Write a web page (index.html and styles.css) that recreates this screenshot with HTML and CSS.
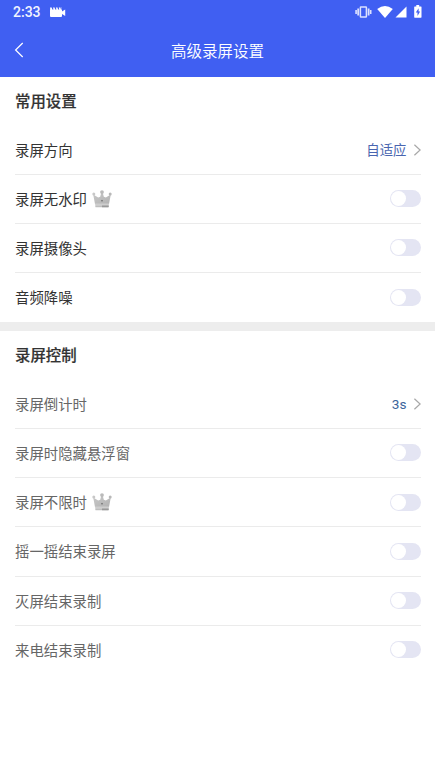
FILE: index.html
```html
<!DOCTYPE html>
<html lang="zh-CN">
<head>
<meta charset="utf-8">
<title>高级录屏设置</title>
<link rel="stylesheet" href="styles.css">
</head>
<body>
<svg class="defs" aria-hidden="true">
  <defs>
    <linearGradient id="silver" x1="0" y1="0" x2="1" y2="1"><stop offset="0" stop-color="#c8c8c8"/><stop offset="1" stop-color="#b2b2b2"/></linearGradient>
    <symbol id="crown" viewBox="0 0 20 18">
      <path d="M1.2 4.5 6.2 7.4 8.2 6.8 9.2 3H10.8L11.8 6.8 13.8 7.4 18.8 4.5 17 14H3Z" fill="url(#silver)"/>
      <circle cx="1.8" cy="4" r="1.5" fill="#c8c8c8"/><circle cx="10" cy="2.1" r="1.9" fill="#bababa"/><circle cx="18.2" cy="4" r="1.5" fill="#b8b8b8"/>
      <path d="M3 13.6H17L16.7 15.2H3.3Z" fill="#cecece"/>
      <path d="M3.3 15.2H16.7V16.4Q16.7 17.3 15.8 17.3H4.3Q3.3 17.3 3.3 16.4Z" fill="#bebebe"/>
      <path d="M10 15.4H16.7V16.4Q16.7 17.3 15.8 17.3H10Z" fill="#999"/>
      <path d="m10 9.8 1.1 1-1.1 1-1.1-1Z" fill="#707070"/>
    </symbol>
    <symbol id="chevron" viewBox="0 0 8 12"><path d="M1.4.8 7.1 6 1.4 11.2" fill="none" stroke="#a8a8a8" stroke-width="1.2"/></symbol>
  </defs>
</svg>
<header class="top">
  <div class="status">
    <span class="time">2:33</span>
    <svg class="camera" width="16" height="11" viewBox="0 0 16 11"><path d="M0 2.6H12V4.4L15.2 2.5V9L12 7V9Q12 10 11 10H1Q0 10 0 9ZM0 .6H1.7L2.3 2.8H.3ZM3 .6H4.6L5.2 2.8H3.6ZM5.9 .6H7.5L8.1 2.8H6.5ZM8.8 .6H10.4L11 2.8H9.4ZM11.5.6H12V2.8Z" fill="#fff"/></svg>
    <div class="signals">
      <svg width="17" height="12" viewBox="0 0 17 12"><g fill="none" stroke="#dce1ff"><rect x="5.4" y="1" width="6" height="10" rx=".5" stroke-width="1.5"/><path d="M3.2 2.5V9.5M13.6 2.5V9.5" stroke-width="1.8"/><path d="M1.1 4V8M15.7 4V8" stroke-width="1.6"/></g></svg>
      <svg class="wifi" width="16" height="12" viewBox="0 0 16 12"><path d="M.2 3Q8-2.8 15.8 3L8 12Z" fill="#fff"/></svg>
      <svg class="cell" width="12" height="12" viewBox="0 0 12 12"><path d="M11.5.5V11.5H.5Z" fill="#fff"/></svg>
      <svg class="battery" width="8" height="13" viewBox="0 0 8 13"><path d="M2.3 0H5.2V1.4H7Q7.5 1.4 7.5 2V12Q7.5 12.7 7 12.7H.7Q.2 12.7.2 12V2Q.2 1.4.7 1.4H2.3Z" fill="#fff"/><path d="M4.6 3.2 1.8 7.6H3.5V11L6.1 6.5H4.6Z" fill="#405ff2"/></svg>
    </div>
  </div>
  <div class="bar">
    <svg class="back" width="10" height="16" viewBox="0 0 10 16"><path d="M8.7 1 1.6 8 8.7 15" fill="none" stroke="#fff" stroke-width="1.2"/></svg>
    <h1>高级录屏设置</h1>
  </div>
</header>
<main>
  <section>
    <h2>常用设置</h2>
    <div class="row"><span>录屏方向</span><span class="value">自适应</span><svg class="chevron"><use href="#chevron"/></svg></div>
    <div class="row"><span>录屏无水印</span><svg class="crown"><use href="#crown"/></svg><i class="switch"></i></div>
    <div class="row"><span>录屏摄像头</span><i class="switch"></i></div>
    <div class="row"><span>音频降噪</span><i class="switch"></i></div>
  </section>
  <section class="control">
    <h2>录屏控制</h2>
    <div class="row"><span>录屏倒计时</span><span class="value seconds">3s</span><svg class="chevron"><use href="#chevron"/></svg></div>
    <div class="row"><span>录屏时隐藏悬浮窗</span><i class="switch"></i></div>
    <div class="row"><span>录屏不限时</span><svg class="crown"><use href="#crown"/></svg><i class="switch"></i></div>
    <div class="row"><span>摇一摇结束录屏</span><i class="switch"></i></div>
    <div class="row"><span>灭屏结束录制</span><i class="switch"></i></div>
    <div class="row"><span>来电结束录制</span><i class="switch"></i></div>
  </section>
</main>
</body>
</html>
```
FILE: styles.css
```css
* { box-sizing: border-box; }
body {
  margin: 0;
  height: 773px;
  overflow: hidden;
  background: #fff;
  color: #333;
  font-family: "Noto Sans CJK SC", sans-serif;
}
svg { display: block; flex: none; }
.defs { position: absolute; width: 0; height: 0; }
.top { height: 77px; background: #405ff2; color: #fff; }
.status { height: 24px; padding: 0 13px; display: flex; align-items: center; }
.time { font: 500 14px/24px Roboto, sans-serif; width: 37px; color: #f2f4ff; }
.signals { margin-left: auto; display: flex; align-items: center; margin-top: -1px; }
.wifi { margin-left: 5px; }
.cell { margin-left: 2px; }
.battery { margin-left: 7px; }
.bar {
  height: 53px;
  padding: 0 14px;
  display: grid;
  grid-template-columns: 20px 1fr 20px;
  align-items: center;
}
.back { margin-top: -2px; }
h1 { margin: 0; padding-bottom: 2px; font-size: 15.5px; font-weight: 350; text-align: center; line-height: 24px; }
section { padding: 0 14.5px; }
.control { border-top: 9px solid #ededed; }
h2 { margin: 0; height: 48.4px; padding-left: .5px; font-size: 15.4px; line-height: 47.6px; font-weight: 500; -webkit-text-stroke: .2px currentColor; }
.row {
  height: 49.22px;
  display: flex;
  align-items: center;
  border-bottom: 1px solid #ebebeb;
  font-size: 14.4px;
  line-height: 24px;
}
.row > span:first-child { padding-left: .5px; }
.row:last-child { border-bottom-color: transparent; }
.control .row { color: #666; }
.crown { width: 20px; height: 18px; margin-left: 5px; }
.row .value { margin-left: auto; padding-bottom: 1px; color: #4965b0; font-size: 13.4px; }
.row .seconds { padding-bottom: 0; color: #3c659b; font-family: Roboto, sans-serif; font-size: 13.6px; }
.chevron { width: 8px; height: 12px; margin-left: 6px; }
.switch {
  width: 31px;
  height: 17px;
  margin-left: auto;
  padding: 1px;
  border-radius: 9px;
  background: #e4e5f3;
}
.switch::before { content: ""; display: block; width: 15px; height: 15px; border-radius: 50%; background: #fff; }
```
